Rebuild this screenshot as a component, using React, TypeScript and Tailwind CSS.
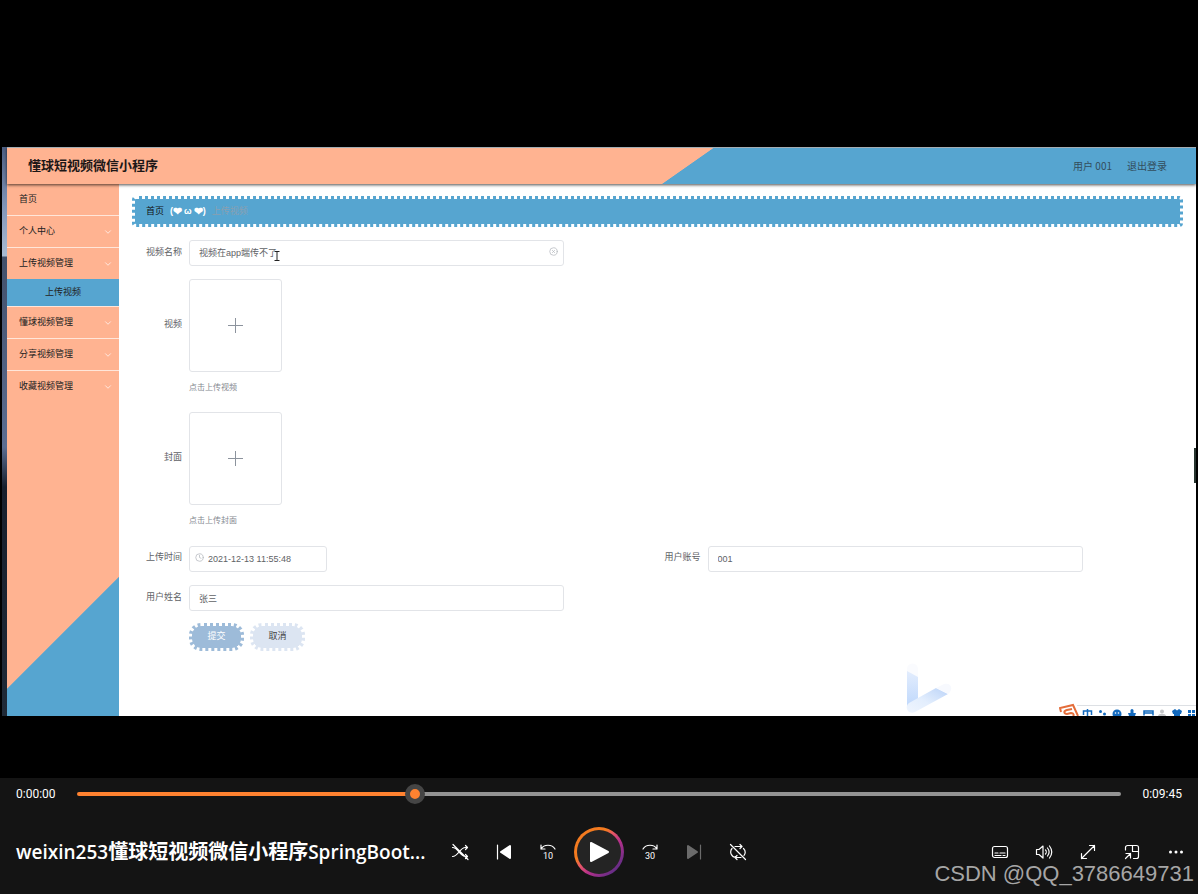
import { useState } from "react";
import type { ReactNode } from "react";
import { ChevronDown, CircleX, Clock } from "lucide-react";

interface MenuItem {
  label: string;
  expandable?: boolean;
  children?: string[];
}

const menu: MenuItem[] = [
  { label: "首页" },
  { label: "个人中心", expandable: true },
  { label: "上传视频管理", expandable: true, children: ["上传视频"] },
  { label: "懂球视频管理", expandable: true },
  { label: "分享视频管理", expandable: true },
  { label: "收藏视频管理", expandable: true },
];

const fieldClass =
  "h-[26px] w-full rounded-[3px] border border-[#e2e4e8] bg-white text-[9px] text-[#606266] outline-none";

function Sidebar() {
  return (
    <nav className="w-28 shrink-0 bg-[linear-gradient(315deg,#56a5d0_98px,#ffb391_99px)]">
      {menu.map((item, index) => (
        <div key={item.label}>
          <a
            href="#"
            className={`flex items-center justify-between pr-1.5 pl-3 text-[9px] text-[#222] ${
              item.children ? "h-[31px]" : "h-8"
            } ${
              index < menu.length - 1 && !item.children
                ? "border-b border-[#ffe6da]"
                : ""
            }`}
          >
            {item.label}
            {item.expandable && (
              <ChevronDown className="size-2.5 text-[#fff1ea]" />
            )}
          </a>
          {item.children?.map((child) => (
            <a
              key={child}
              href="#"
              className="flex h-7 items-center justify-center border-b border-[#ffe6da] bg-[#56a5d0] text-[9px] text-[#222]"
            >
              {child}
            </a>
          ))}
        </div>
      ))}
    </nav>
  );
}

function Field({
  id,
  label,
  children,
}: {
  id: string;
  label: string;
  children: ReactNode;
}) {
  return (
    <div className="flex items-center gap-[7px]">
      <label
        htmlFor={id}
        className="w-[50px] shrink-0 text-right text-[9px] text-[#606266]"
      >
        {label}
      </label>
      {children}
    </div>
  );
}

function UploadField({
  id,
  label,
  hint,
}: {
  id: string;
  label: string;
  hint: string;
}) {
  return (
    <div className="mb-4">
      <Field id={id} label={label}>
        <button
          id={id}
          type="button"
          className="flex size-[93px] items-center justify-center rounded-[3px] border border-[#e2e4e8]"
        >
          <svg
            viewBox="0 0 15 15"
            className="size-[15px]"
            stroke="#8c939d"
            aria-hidden="true"
          >
            <path d="M7.500 0v15M0 7.500h15" />
          </svg>
        </button>
      </Field>
      <p className="mt-2 ml-[57px] text-[8px] leading-4 text-[#84888f]">
        {hint}
      </p>
    </div>
  );
}

function UploadForm() {
  const [name, setName] = useState("视频在app端传不了");

  return (
    <form className="mt-3 pr-3.5" onSubmit={(e) => e.preventDefault()}>
      <div className="mb-[13px] grid grid-cols-2">
        <Field id="name" label="视频名称">
          <div className="relative w-[375px]">
            <input
              id="name"
              value={name}
              onChange={(e) => setName(e.target.value)}
              className={`${fieldClass} px-[9px]`}
            />
            <CircleX className="absolute top-2 right-1.5 size-[9px] text-[#b4b8be]" />
            {/* Text cursor */}
            <svg
              viewBox="0 0 6 10"
              className="absolute top-3 left-[85px] h-2.5 w-1.5"
              stroke="#222"
              fill="none"
              aria-hidden="true"
            >
              <path d="M0.5 0.5h5M3 0.5v9M0.5 9.5h5" />
            </svg>
          </div>
        </Field>
      </div>

      <UploadField id="video" label="视频" hint="点击上传视频" />
      <UploadField id="cover" label="封面" hint="点击上传封面" />

      <div className="mb-[13px] grid grid-cols-2">
        <Field id="time" label="上传时间">
          <div className="relative w-[138px]">
            <Clock className="absolute top-2 left-1.5 size-[9px] text-[#b4b8be]" />
            <input
              id="time"
              defaultValue="2021-12-13 11:55:48"
              className={`${fieldClass} pr-2 pl-[18px]`}
            />
          </div>
        </Field>
        <Field id="account" label="用户账号">
          <div className="w-[375px]">
            <input
              id="account"
              defaultValue="001"
              className={`${fieldClass} px-[9px]`}
            />
          </div>
        </Field>
      </div>

      <Field id="realname" label="用户姓名">
        <div className="w-[375px]">
          <input
            id="realname"
            defaultValue="张三"
            className={`${fieldClass} px-[9px]`}
          />
        </div>
      </Field>

      <div className="mt-3 ml-[57px] flex gap-1.5">
        <button
          type="submit"
          className="h-7 w-[55px] rounded-xl border-[3px] border-dotted border-white bg-[#9dbbd9] text-[9px] text-white"
        >
          提交
        </button>
        <button
          type="button"
          className="h-7 w-[55px] rounded-xl border-[3px] border-dotted border-white bg-[#dce5f2] text-[9px] text-[#444]"
        >
          取消
        </button>
      </div>
    </form>
  );
}

function RecorderLogo() {
  return (
    <svg
      viewBox="0 0 46 54"
      className="absolute right-[244px] bottom-0 h-[54px] w-[46px]"
      aria-hidden="true"
    >
      <defs>
        <linearGradient id="stem" x1="0" y1="0" x2="0" y2="1">
          <stop offset="0" stopColor="#e3edfd" />
          <stop offset="1" stopColor="#bdd7fc" />
        </linearGradient>
        <linearGradient id="arm" x1="0" y1="1" x2="1" y2="0">
          <stop offset="0" stopColor="#eff5fe" />
          <stop offset="0.45" stopColor="#e3eefd" />
          <stop offset="1" stopColor="#bbd3f8" />
        </linearGradient>
      </defs>
      <path d="M1 7a5 5 0 0 1 11 0v11L1 10z" fill="#fafbfe" />
      <path d="M1 9l11 6v27L1 47z" fill="url(#stem)" />
      <path d="M3 41L30 26l12 6-33 18c-7 3-11-5-6-9z" fill="url(#arm)" />
      <path d="M30 26l8-4c7-2 10 5 4 10z" fill="#f7f9fe" />
    </svg>
  );
}

function ImeBar() {
  return (
    <svg
      viewBox="0 0 137 13"
      className="absolute right-0 bottom-0 h-[13px] w-[137px]"
      aria-hidden="true"
    >
      <path d="M18 3h119v10H18z" fill="#fff" />
      <path d="M18 2.500h119" stroke="#dde0e4" />
      <path d="M1 5l13-3 5 11H3z" fill="#fff" />
      <path
        d="M2 9L1 5l13-3 5 11"
        stroke="#e46d3a"
        strokeWidth="2"
        fill="none"
      />
      <path
        d="M13 6L8 7c-4 1-3 4 0 4l4-1c3 0 3 2 2 4"
        stroke="#e46d3a"
        strokeWidth="2"
        fill="none"
      />
      <g stroke="#1269bd" strokeWidth="1.500" fill="none">
        <path d="M24.500 12V8h8v4M28.500 6v7" />
        <path d="M85 12.500V8h9v4.500M85 10h9" />
      </g>
      <g fill="#1269bd">
        <circle cx="41.500" cy="8.500" r="1.500" />
        <circle cx="45.500" cy="11" r="1.500" />
        <circle cx="58" cy="11" r="4.500" />
        <rect x="71.500" y="6" width="3" height="6" rx="1.500" />
        <path d="M69 10h8l-1 3h-6zM113 8l3-2 2 1.500L120 6l3 2-1 3h-1v2h-6v-2h-1z" />
        <path d="M129 7h3v3h-3zM133 7h3v3h-3zM129 11h3v2h-3zM133 11h3v2h-3z" />
      </g>
      <circle cx="56.500" cy="10" r="0.800" fill="#fff" />
      <circle cx="59.500" cy="10" r="0.800" fill="#fff" />
      <circle cx="103" cy="8.500" r="2" fill="#c4c6c8" />
      <path d="M99 13c0-3 8-3 8 0z" fill="#c4c6c8" />
    </svg>
  );
}

function AdminScreen() {
  return (
    <section className="relative mx-0.5 flex overflow-hidden font-['Liberation_Sans','Noto_Sans_CJK_SC',sans-serif]">
      <div className="w-[5px] shrink-0 bg-[linear-gradient(to_bottom,#4c5e82,#8195b8_60px,#a9bbd2_109px,#42506a_110px,#5b6d91_300px,#18202d_340px,#202a37)]" />
      <div className="min-w-0 flex-1">
        <header className="relative flex h-[37px] items-center justify-between border-t border-[#a4adb3] bg-[linear-gradient(145deg,#ffb391_56.9%,#56a5d0_57%)] pr-[29px] pl-[21px] shadow-[0_1px_3px_rgba(0,0,0,0.7)]">
          <h1 className="text-[13px] font-bold text-[#1c1717]">
            懂球短视频微信小程序
          </h1>
          <div className="flex items-center gap-[15px] font-['Noto_Sans_CJK_SC',sans-serif] text-[10px] leading-4 text-[#334d5c]">
            <span>用户 001</span>
            <a href="#">退出登录</a>
          </div>
        </header>
        <div className="flex bg-white">
          <Sidebar />
          <main className="min-w-0 flex-1 px-[13px] pt-3 pb-[65px]">
            <div className="flex h-[31px] items-center gap-1.5 rounded border-[3px] border-dotted border-white bg-[#56a5d0] px-[11px] text-[9px]">
              <a href="#" className="text-[#111]">
                首页
              </a>
              <span className="flex items-center font-bold text-white">
                (<span className="text-[11px]">❤</span>
                <span className="px-0.5">ω</span>
                <span className="text-[11px]">❤</span>)
              </span>
              <span className="text-[#8aa0b0]">上传视频</span>
            </div>
            <UploadForm />
          </main>
        </div>
      </div>
      <RecorderLogo />
      <ImeBar />
      <div className="absolute right-0 top-[301px] h-[35px] w-0.5 bg-[#26342e]" />
    </section>
  );
}

function ControlButton({
  label,
  disabled = false,
  children,
}: {
  label: string;
  disabled?: boolean;
  children: ReactNode;
}) {
  return (
    <button
      type="button"
      aria-label={label}
      disabled={disabled}
      className="flex h-11 w-11 shrink-0 items-center justify-center text-white disabled:text-[#6b6b6b]"
    >
      <svg
        viewBox="0 0 18 18"
        className="size-[18px]"
        fill="none"
        stroke="currentColor"
        strokeWidth="1.200"
        strokeLinecap="round"
        strokeLinejoin="round"
        aria-hidden="true"
      >
        {children}
      </svg>
    </button>
  );
}

function PlayerBar() {
  const [position, setPosition] = useState(320);

  return (
    <footer className="relative h-[116px] bg-[#141414] text-white">
      <div className="flex h-8 items-center justify-between px-4 font-['Roboto',sans-serif] text-[12px]">
        <span className="w-[61px]">0:00:00</span>
        <input
          type="range"
          aria-label="播放进度"
          min={0}
          max={1000}
          value={position}
          onChange={(e) => setPosition(Number(e.target.value))}
          style={{
            backgroundImage: `linear-gradient(to right, #ff8230 ${position / 10}%, #939393 ${position / 10}%)`,
          }}
          className="h-1 flex-1 appearance-none rounded-full [&::-webkit-slider-thumb]:size-5 [&::-webkit-slider-thumb]:appearance-none [&::-webkit-slider-thumb]:rounded-full [&::-webkit-slider-thumb]:border-[5px] [&::-webkit-slider-thumb]:border-[#454545] [&::-webkit-slider-thumb]:bg-[#ff8230]"
        />
        <span className="w-[61px] text-right">0:09:45</span>
      </div>

      <div className="grid h-[84px] grid-cols-[1fr_auto_1fr] items-center">
        <h2 className="pl-4 font-['Open_Sans','Noto_Sans_CJK_SC',sans-serif] text-[19px] font-semibold whitespace-nowrap">
          weixin253
          <span className="text-[20px] font-bold">懂球短视频微信小程序</span>
          SpringBoot...
        </h2>

        <div className="flex items-center">
          <ControlButton label="随机播放">
            <path d="M1.500 4.500c6 0 7 9 13 9h2M1.500 13.500c6 0 7-9 13-9h2M14.500 2.500l2 2-2 2M14.500 11.500l2 2-2 2M2 1.500l15 15" />
          </ControlButton>
          <ControlButton label="上一个">
            <path d="M2.500 2v14" />
            <path d="M15 3v12L6 9z" fill="currentColor" strokeWidth="2" />
          </ControlButton>
          <ControlButton label="后退 10 秒">
            <path d="M2 2v4h4M2 6c3-5 11-5 14 0" />
            <text
              x="9"
              y="16"
              fontSize="9"
              textAnchor="middle"
              fill="currentColor"
              stroke="none"
              className="font-['Roboto',sans-serif]"
            >
              10
            </text>
          </ControlButton>
          <button
            type="button"
            aria-label="播放"
            className="mx-1 flex size-[50px] items-center justify-center rounded-full bg-[linear-gradient(135deg,#f47b20_35%,#e85866_45%,#b5308b_60%,#652d86_85%)] p-[3px]"
          >
            <span className="flex size-full items-center justify-center rounded-full bg-[#242424]">
              <svg
                viewBox="0 0 20 20"
                className="size-5"
                fill="currentColor"
                stroke="currentColor"
                strokeWidth="2"
                strokeLinejoin="round"
                aria-hidden="true"
              >
                <path d="M2 1v18l17-9z" />
              </svg>
            </span>
          </button>
          <ControlButton label="前进 30 秒">
            <path d="M16 2v4h-4M16 6c-3-5-11-5-14 0" />
            <text
              x="9"
              y="16"
              fontSize="9"
              textAnchor="middle"
              fill="currentColor"
              stroke="none"
              className="font-['Roboto',sans-serif]"
            >
              30
            </text>
          </ControlButton>
          <ControlButton label="下一个" disabled>
            <path d="M15.500 2v14" />
            <path d="M3 3v12l9-6z" fill="currentColor" strokeWidth="2" />
          </ControlButton>
          <ControlButton label="循环关闭">
            <path d="M6 3.500h6M14.500 5.500a5.500 5.500 0 0 1 .5 7M12 14.500H7a5.500 5.500 0 0 1-4-9M11 1.500l2 2-2 2M8 12.500l-2 2 2 2M1.500 1.500l15 15" />
          </ControlButton>
        </div>

        <div className="flex justify-end">
          <ControlButton label="字幕">
            <rect x="1.500" y="3.500" width="15" height="11" rx="2" />
            <path d="M4 10h3M9 10h5M4 12.500h6M12 12.500h2" />
          </ControlButton>
          <ControlButton label="音量">
            <path d="M1.500 6.500v5H4L8 15V3L4 6.500zM10.500 7c1 1 1 3 0 4M12.500 5c2 2.500 2 5.500 0 8M14.500 3c3 4 3 8 0 12" />
          </ControlButton>
          <ControlButton label="全屏">
            <path d="M2.500 15.500l13-13M10.500 2.500h5v5M2.500 10.500v5h5" />
          </ControlButton>
          <ControlButton label="迷你播放器">
            <path d="M2.500 7V4.500a2 2 0 0 1 2-2h9a2 2 0 0 1 2 2v9a2 2 0 0 1-2 2h-3M9.500 2.500v6h6M2.500 15.500l5-5M3 10.500h4.500V15" />
          </ControlButton>
          <ControlButton label="更多">
            <g fill="currentColor" stroke="none">
              <circle cx="3.500" cy="9" r="1.500" />
              <circle cx="9" cy="9" r="1.500" />
              <circle cx="14.500" cy="9" r="1.500" />
            </g>
          </ControlButton>
        </div>
      </div>

      <span className="absolute right-1 bottom-1 font-['Liberation_Sans',sans-serif] text-[22px] text-[#a6a6a6]">
        CSDN @QQ_3786649731
      </span>
    </footer>
  );
}

export default function App() {
  return (
    <div className="flex min-h-screen flex-col bg-black">
      <div className="flex-1 pt-[147px]">
        <AdminScreen />
      </div>
      <PlayerBar />
    </div>
  );
}
